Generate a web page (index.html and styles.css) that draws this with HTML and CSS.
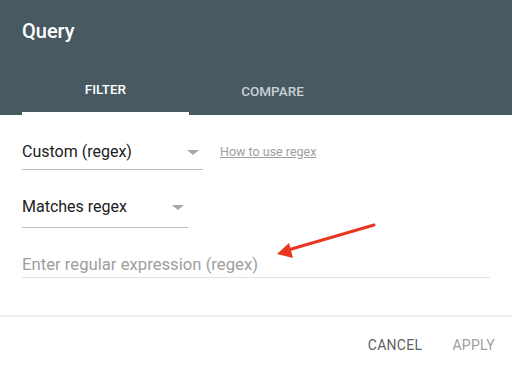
FILE: index.html
```html
<!DOCTYPE html>
<html lang="en">
<head>
  <meta charset="UTF-8">
  <title>Query</title>
  <link rel="stylesheet" href="styles.css">
</head>
<body>
  <div class="dialog">
    <div class="header">
      <h1 class="title">Query</h1>
      <div class="tabs">
        <div class="tab active">FILTER</div>
        <div class="tab">COMPARE</div>
      </div>
    </div>

    <div class="content">
      <div class="row">
        <div class="select select-type">
          <span>Custom (regex)</span>
          <span class="caret"></span>
        </div>
        <a class="help-link" href="#">How to use regex</a>
      </div>

      <div class="row">
        <div class="select select-match">
          <span>Matches regex</span>
          <span class="caret"></span>
        </div>
      </div>

      <div class="field">
        <input type="text" placeholder="Enter regular expression (regex)">
      </div>
    </div>

    <div class="footer">
      <button class="action">CANCEL</button>
      <button class="action disabled">APPLY</button>
    </div>

    <!-- red annotation arrow -->
    <svg class="annotation" width="512" height="371" viewBox="0 0 512 371">
      <line x1="374" y1="225" x2="288" y2="250" stroke="#e8371f" stroke-width="3" stroke-linecap="round"/>
      <polygon points="277,254 289,243 293,258" fill="#e8371f"/>
    </svg>
  </div>
</body>
</html>
```

FILE: styles.css
```css
body {
  margin: 0;
  font-family: Roboto, "Liberation Sans", sans-serif;
  background: #ffffff;
}

.dialog {
  position: relative;
  width: 512px;
  height: 371px;
  overflow: hidden;
}

.header {
  background: #485962;
  height: 115px;
  padding: 0 22px;
  box-sizing: border-box;
}

.title {
  margin: 0;
  padding-top: 19px;
  font-size: 20px;
  line-height: 24px;
  font-weight: 500;
  color: #ffffff;
}

.tabs {
  display: flex;
  margin-top: 24px;
}

.tab {
  width: 167px;
  height: 48px;
  line-height: 48px;
  text-align: center;
  font-size: 13.5px;
  font-weight: 500;
  color: #c9d0d4;
  box-sizing: border-box;
}

.tab.active {
  color: #ffffff;
  border-bottom: 3px solid #ffffff;
  line-height: 45px;
}

.content {
  padding: 27px 22px 0;
}

.row {
  display: flex;
  align-items: center;
  margin-bottom: 27px;
}

.select {
  display: flex;
  align-items: center;
  justify-content: space-between;
  font-size: 16px;
  line-height: 20px;
  color: #212121;
  padding-bottom: 7px;
  border-bottom: 1px solid #bdbdbd;
}

.select-type { width: 181px; }
.select-match { width: 166px; padding-bottom: 10px; }

.caret {
  width: 0;
  height: 0;
  border-left: 6px solid transparent;
  border-right: 6px solid transparent;
  border-top: 5px solid #a7a7a7;
  margin-right: 4px;
}

.help-link {
  margin-left: 17px;
  margin-bottom: 10px;
  font-size: 12.5px;
  color: #9e9e9e;
  text-decoration: underline;
}

.field {
  width: 468px;
  border-bottom: 1px solid #e0e0e0;
  margin-top: 4px;
}

.field input {
  width: 100%;
  border: none;
  outline: none;
  padding: 0 0 2px;
  font-family: inherit;
  font-size: 16.7px;
  line-height: 20px;
  color: #212121;
  background: transparent;
}

.field input::placeholder {
  color: #9e9e9e;
}

.footer {
  position: absolute;
  left: 0;
  right: 0;
  top: 315px;
  border-top: 2px solid #eeeeee;
  display: flex;
  justify-content: flex-end;
  padding: 18px 17px 0 0;
  gap: 30px;
}

.action {
  border: none;
  background: none;
  padding: 0;
  font-family: inherit;
  font-size: 14px;
  line-height: 20px;
  letter-spacing: 0.3px;
  color: #616161;
}

.action.disabled {
  color: #9e9e9e;
}

.annotation {
  position: absolute;
  left: 0;
  top: 0;
  pointer-events: none;
}
```
